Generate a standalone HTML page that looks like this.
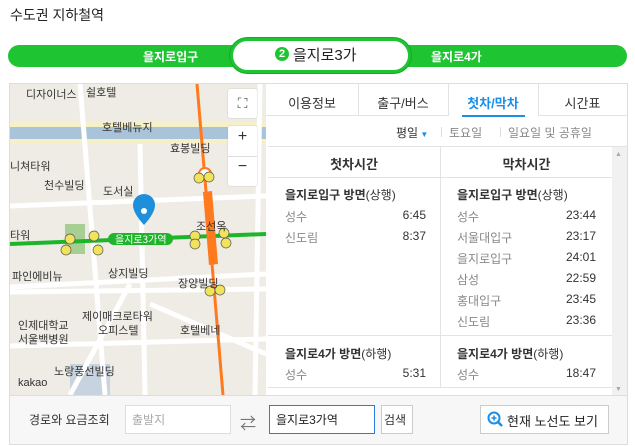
<!DOCTYPE html>
<html><head><meta charset="utf-8"><style>
*{margin:0;padding:0;box-sizing:border-box}
body{width:635px;height:446px;background:#fff;font-family:"Liberation Sans","Noto Sans CJK KR","NanumGothic",sans-serif;position:relative;overflow:hidden;color:#333}
.a{position:absolute}
.t{font-size:12px;white-space:nowrap}
</style></head><body>
<div class="a" style="left:10px;top:5px;font-size:14px;color:#222">수도권 지하철역</div>
<div class="a" style="left:8px;top:45px;width:619px;height:22px;background:#1fc433;border-radius:11px"></div>
<div class="a t" style="left:143px;top:48px;color:#fff;font-weight:bold">을지로입구</div>
<div class="a t" style="left:431px;top:48px;color:#fff;font-weight:bold">을지로4가</div>
<div class="a" style="left:230px;top:38px;width:181px;height:35px;border:3px solid #1fc433;border-radius:18px;background:#fff;box-shadow:0 0 0 1px #17a82a"></div>
<div class="a" style="left:275px;top:47px;width:14px;height:14px;border-radius:7px;background:#1fc433;color:#fff;font-size:11px;font-weight:bold;text-align:center;line-height:14px">2</div>
<div class="a" style="left:293px;top:44px;font-size:15px;color:#222">을지로3가</div>

<div class="a" style="left:9px;top:83px;width:619px;height:362px;border:1px solid #ddd"></div>
<!-- map -->
<div class="a" style="left:10px;top:84px;width:256px;height:311px;background:#efece6;overflow:hidden">
<svg width="256" height="311" style="position:absolute;left:0;top:0">
<rect x="0" y="38" width="256" height="22" fill="#f6f0c8"/>
<rect x="0" y="43" width="256" height="12" fill="#a9c4d8"/>
<rect x="55" y="140" width="20" height="30" fill="#a7cf94"/>
<rect x="60" y="280" width="40" height="31" fill="#c7d3de"/>
<g stroke="#fff" stroke-width="5" fill="none">
<path d="M0 122 L256 112"/><path d="M0 203 L256 190"/><path d="M0 208 L256 205"/>
<path d="M70 0 L95 311"/><path d="M130 60 L135 311"/><path d="M250 0 L245 311"/>
<path d="M0 262 L256 255"/><path d="M120 200 L60 311"/><path d="M140 220 L256 270"/>
</g>
<path d="M187 0 L213 311" stroke="#ff7a1f" stroke-width="3"/>
<path d="M0 160 L256 150" stroke="#1fb52b" stroke-width="4"/>
<rect x="98" y="149" width="65" height="12" rx="6" fill="#1fb52b"/>
<text x="105" y="159" font-size="10" fill="#fff" font-family="Noto Sans CJK KR">을지로3가역</text>
<polygon points="193,108 202,107 208,180 199,181" fill="#ff7a1f"/>
<circle cx="195" cy="90" r="6" fill="#fff" stroke="#ff7a1f" stroke-width="2"/>
<path d="M132 118 a11 11 0 1 1 22 0 q0 8 -11 20 q-11 -12 -11 -20z" fill="#1e8fdb" transform="translate(-9,3)"/>
<circle cx="134" cy="127" r="3" fill="#fff"/>
<g fill="#f1e35a" stroke="#555" stroke-width=".7">
<circle cx="60" cy="155" r="5"/><circle cx="84" cy="152" r="5"/><circle cx="56" cy="166" r="5"/><circle cx="88" cy="166" r="5"/>
<circle cx="185" cy="152" r="5"/><circle cx="185" cy="160" r="5"/><circle cx="214" cy="149" r="5"/><circle cx="216" cy="159" r="5"/>
<circle cx="189" cy="94" r="5"/><circle cx="199" cy="93" r="5"/><circle cx="200" cy="207" r="5"/><circle cx="210" cy="206" r="5"/>
</g>
<g font-size="11" fill="#333" font-family="Noto Sans CJK KR">
<text x="16" y="14">디자이너스</text><text x="76" y="12">쉴호텔</text>
<text x="92" y="47">호텔베뉴지</text><text x="160" y="68">효봉빌딩</text>
<text x="0" y="86">니쳐타워</text><text x="34" y="105">천수빌딩</text><text x="93" y="111">도서실</text>
<text x="0" y="155">타워</text><text x="186" y="146">조선옥</text>
<text x="2" y="196">파인에비뉴</text><text x="98" y="193">상지빌딩</text><text x="168" y="203">장양빌딩</text>
<text x="72" y="236">제이매크로타워</text><text x="88" y="250">오피스텔</text><text x="170" y="250">호텔베네</text>
<text x="8" y="245">인제대학교</text><text x="8" y="259">서울백병원</text><text x="44" y="291">노랑풍선빌딩</text>
<text x="8" y="302" font-family="Liberation Sans">kakao</text>
</g>
</svg>
<div class="a" style="left:218px;top:5px;width:29px;height:29px;background:#fff;border-radius:2px;box-shadow:0 0 1px #999;text-align:center;line-height:28px;font-size:14px;color:#555">⛶</div>
<div class="a" style="left:218px;top:42px;width:29px;height:60px;background:#fff;border-radius:2px;box-shadow:0 0 1px #999"></div>
<div class="a" style="left:218px;top:72px;width:29px;height:1px;background:#ddd"></div>
<div class="a" style="left:218px;top:44px;width:29px;text-align:center;font-size:16px;color:#333">+</div>
<div class="a" style="left:218px;top:74px;width:29px;text-align:center;font-size:16px;color:#333">−</div>
</div>

<!-- tabs -->
<div class="a" style="left:266px;top:84px;width:361px;height:32px;border-bottom:1px solid #e3e3e3"></div>
<div class="a" style="left:358px;top:84px;width:1px;height:32px;background:#e3e3e3"></div>
<div class="a" style="left:448px;top:84px;width:1px;height:32px;background:#e3e3e3"></div>
<div class="a" style="left:538px;top:84px;width:1px;height:32px;background:#e3e3e3"></div>
<div class="a" style="left:449px;top:84px;width:89px;height:33px;background:#fff"></div>
<div class="a t" style="left:266px;top:93px;width:92px;text-align:center;font-size:13px">이용정보</div>
<div class="a t" style="left:358px;top:93px;width:90px;text-align:center;font-size:13px">출구/버스</div>
<div class="a t" style="left:448px;top:93px;width:90px;text-align:center;font-size:13px;color:#1a8fe8;font-weight:bold">첫차/막차</div>
<div class="a t" style="left:538px;top:93px;width:89px;text-align:center;font-size:13px">시간표</div>
<div class="a" style="left:462px;top:115px;width:63px;height:2px;background:#1a8fe8"></div>
<div class="a t" style="left:396px;top:124px;font-size:12px;color:#333">평일<span style="color:#1a8fe8;font-size:8px"> ▼</span></div>
<div class="a" style="left:441px;top:127px;width:1px;height:10px;background:#ddd"></div>
<div class="a t" style="left:449px;top:124px;color:#888">토요일</div>
<div class="a" style="left:500px;top:127px;width:1px;height:10px;background:#ddd"></div>
<div class="a t" style="left:508px;top:124px;color:#888">일요일 및 공휴일</div>

<div class="a" style="left:268px;top:146px;width:359px;height:249px;border-top:1px solid #e3e3e3"></div>
<div class="a" style="left:268px;top:147px;width:344px;height:31px;border-bottom:1px solid #e3e3e3"></div>
<div class="a" style="left:612px;top:147px;width:15px;height:248px;background:#f1f1f1"></div>
<div class="a" style="left:615px;top:151px;font-size:7px;color:#aaa">▲</div>
<div class="a" style="left:615px;top:386px;font-size:7px;color:#aaa">▼</div>
<div class="a" style="left:440px;top:147px;width:1px;height:241px;background:#e3e3e3"></div>
<div class="a t" style="left:268px;top:154px;width:172px;text-align:center;font-weight:bold;font-size:13px">첫차시간</div>
<div class="a t" style="left:441px;top:154px;width:171px;text-align:center;font-weight:bold;font-size:13px">막차시간</div>
<div class="a" style="left:268px;top:335px;width:344px;height:1px;background:#e3e3e3"></div>
<div class="a" style="left:268px;top:387px;width:344px;height:1px;background:#e3e3e3"></div>

<div class="a t" style="left:285px;top:186px;color:#333"><b>을지로입구 방면</b>(상행)</div>
<div class="a t" style="left:285px;top:208px;color:#888">성수</div><div class="a t" style="left:384px;top:208px;width:42px;text-align:right">6:45</div>
<div class="a t" style="left:285px;top:229px;color:#888">신도림</div><div class="a t" style="left:384px;top:229px;width:42px;text-align:right">8:37</div>
<div class="a t" style="left:285px;top:345px;color:#333"><b>을지로4가 방면</b>(하행)</div>
<div class="a t" style="left:285px;top:366px;color:#888">성수</div><div class="a t" style="left:384px;top:366px;width:42px;text-align:right">5:31</div>

<div class="a t" style="left:457px;top:186px;color:#333"><b>을지로입구 방면</b>(상행)</div>
<div class="a t" style="left:457px;top:208px;color:#888">성수</div><div class="a t" style="left:553px;top:208px;width:43px;text-align:right">23:44</div>
<div class="a t" style="left:457px;top:229px;color:#888">서울대입구</div><div class="a t" style="left:553px;top:229px;width:43px;text-align:right">23:17</div>
<div class="a t" style="left:457px;top:250px;color:#888">을지로입구</div><div class="a t" style="left:553px;top:250px;width:43px;text-align:right">24:01</div>
<div class="a t" style="left:457px;top:271px;color:#888">삼성</div><div class="a t" style="left:553px;top:271px;width:43px;text-align:right">22:59</div>
<div class="a t" style="left:457px;top:292px;color:#888">홍대입구</div><div class="a t" style="left:553px;top:292px;width:43px;text-align:right">23:45</div>
<div class="a t" style="left:457px;top:313px;color:#888">신도림</div><div class="a t" style="left:553px;top:313px;width:43px;text-align:right">23:36</div>
<div class="a t" style="left:457px;top:345px;color:#333"><b>을지로4가 방면</b>(하행)</div>
<div class="a t" style="left:457px;top:366px;color:#888">성수</div><div class="a t" style="left:553px;top:366px;width:43px;text-align:right">18:47</div>

<!-- bottom -->
<div class="a" style="left:9px;top:395px;width:619px;height:50px;background:#f7f7f7;border:1px solid #ddd"></div>
<div class="a t" style="left:29px;top:411px;color:#333">경로와 요금조회</div>
<div class="a" style="left:125px;top:405px;width:106px;height:29px;background:#fff;border:1px solid #ddd"></div>
<div class="a t" style="left:132px;top:411px;color:#aaa">출발지</div>
<div class="a" style="left:240px;top:410px;font-size:16px;color:#777">⇄</div>
<div class="a" style="left:269px;top:405px;width:106px;height:29px;background:#fff;border:1px solid #2d7be0"></div>
<div class="a t" style="left:276px;top:411px;color:#222">을지로3가역</div>
<div class="a" style="left:381px;top:405px;width:32px;height:29px;background:#fff;border:1px solid #ccc"></div>
<div class="a t" style="left:384px;top:411px;color:#333">검색</div>
<div class="a" style="left:480px;top:405px;width:129px;height:29px;background:#fff;border:1px solid #ccc"></div>
<svg class="a" style="left:487px;top:411px" width="17" height="17"><circle cx="7" cy="7" r="5.5" fill="none" stroke="#1a8fe8" stroke-width="2"/><path d="M11 11l4 4" stroke="#1a8fe8" stroke-width="2.5"/><path d="M4.5 7h5M7 4.5v5" stroke="#1a8fe8" stroke-width="1.6"/></svg>
<div class="a t" style="left:507px;top:411px;color:#222;font-size:13px">현재 노선도 보기</div>
</body></html>
